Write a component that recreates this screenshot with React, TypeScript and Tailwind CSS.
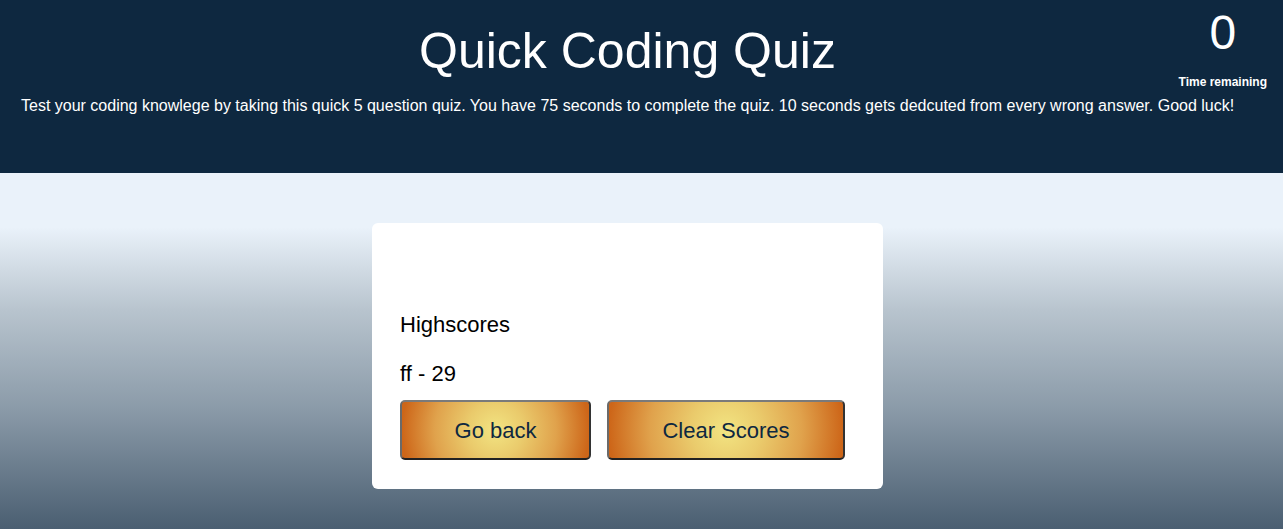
import React from 'react';

const btn =
	'h-[60px] rounded-[5px] border-2 border-t-[#7a7a7a] border-l-[#6a6a6a] border-r-[#333] border-b-[#222] bg-[radial-gradient(circle_farthest-side,#f2e482_0%,#eacb6c_30%,#e0a24c_65%,#cd6619_100%)] text-[#0e2840] text-[22px]';

const App = () => {
	const scores = [{ name: 'ff', score: 29 }];
	return (
		<div className="min-h-[529px] flex flex-col font-['Liberation_Sans',Arial,sans-serif]">
			<header className="relative bg-[#0e2840] h-[173px] text-white">
				<h1 className="pt-[21px] pr-[28px] text-center text-[50px] leading-[60px]">Quick Coding Quiz</h1>
				<p className="pl-[21px] mt-[16px] text-[16px] leading-[18px]">
					Test your coding knowlege by taking this quick 5 question quiz. You have 75 seconds to complete the quiz. 10 seconds gets dedcuted from every wrong answer. Good luck!
				</p>
				<div className="absolute right-[16px] top-[5px] flex flex-col items-center">
					<span className="text-[48px] leading-[56px]">0</span>
					<span className="mt-[14px] text-[12px] font-bold leading-[14px]">Time remaining</span>
				</div>
			</header>
			<main className="flex-1 flex justify-center pt-[50px] pb-[40px] pr-[28px] bg-[linear-gradient(to_bottom,#eaf2fa_0px,#eaf2fa_54px,#b8c4ce_137px,#8a9aa8_237px,#4a5e71_356px)]">
				<div className="w-[511px] h-[266px] bg-white rounded-[6px] px-[28px] pt-[90px]">
					<h2 className="text-[22px] leading-[24px]">Highscores</h2>
					<ul className="mt-[25px]">
						{scores.map((s) => (
							<li key={s.name} className="text-[22px] leading-[24px]">
								{s.name} - {s.score}
							</li>
						))}
					</ul>
					<div className="mt-[14px] flex gap-[16px]">
						<button className={`w-[191px] ${btn}`}>Go back</button>
						<button className={`w-[238px] ${btn}`}>Clear Scores</button>
					</div>
				</div>
			</main>
		</div>
	);
};

export default App;
